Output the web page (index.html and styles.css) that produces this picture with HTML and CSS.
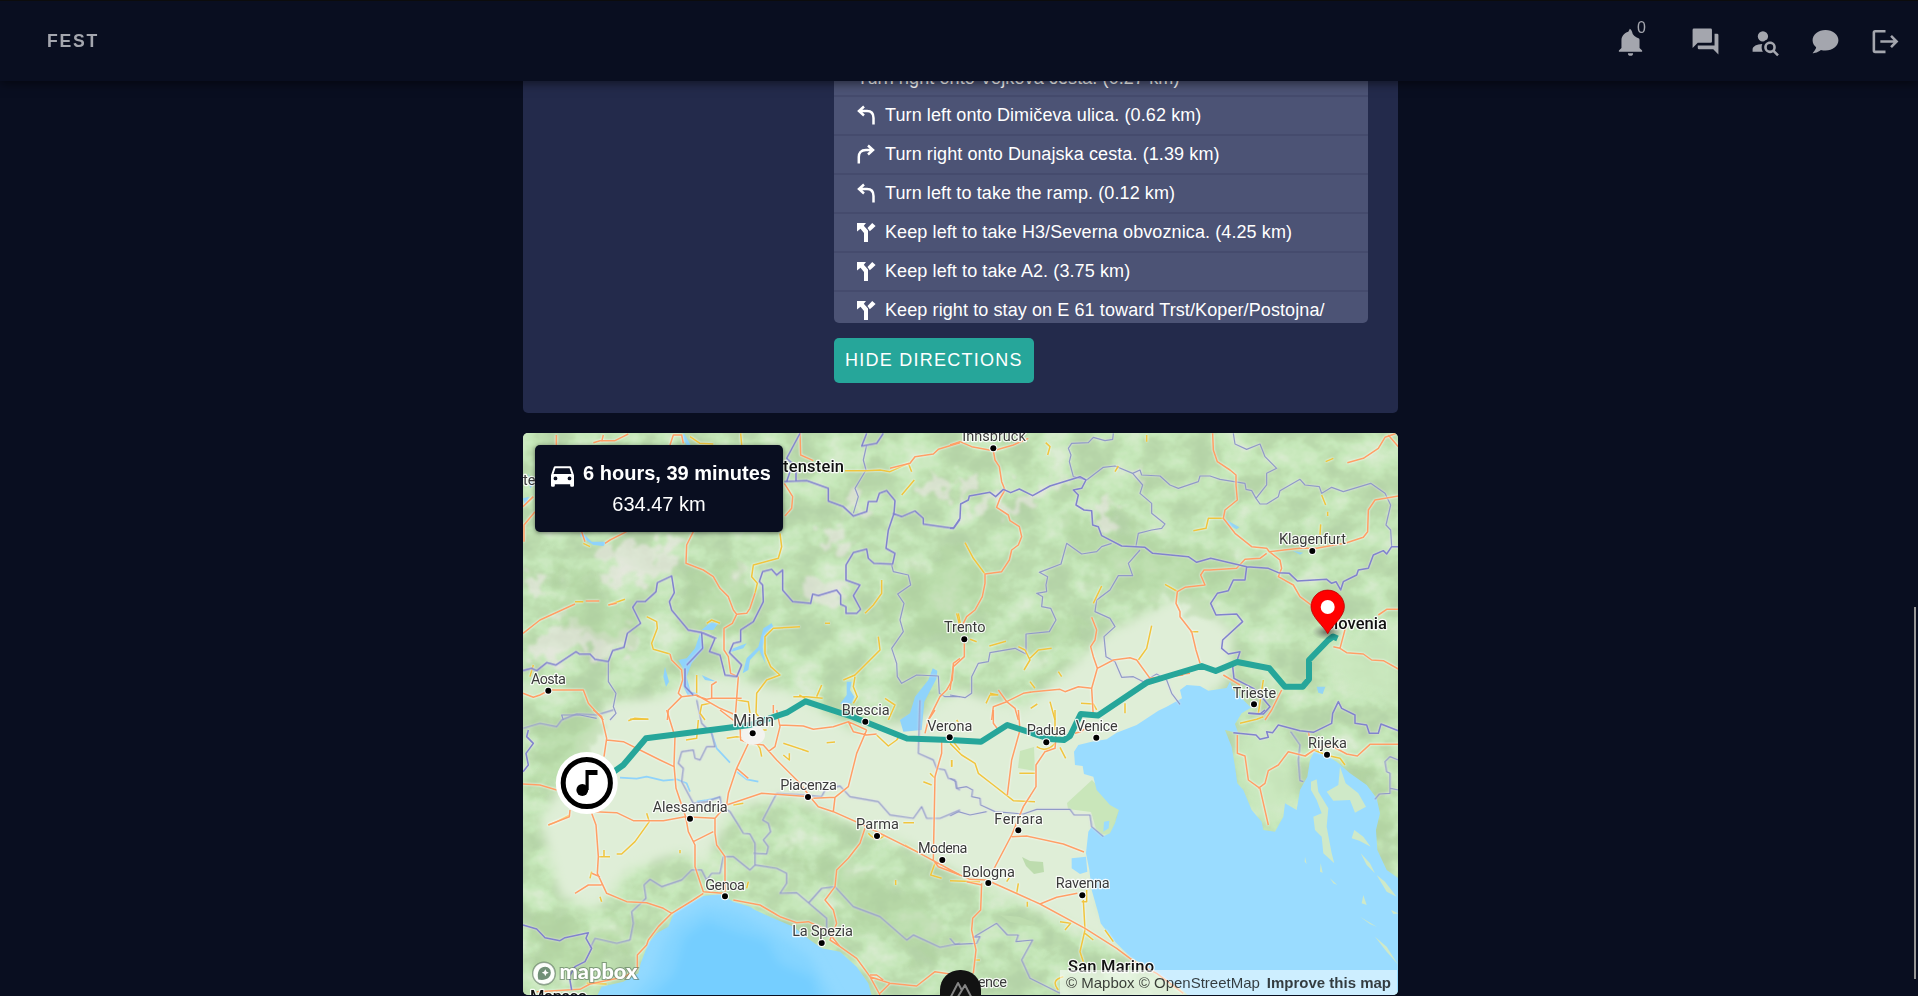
FILE: index.html
```html
<!DOCTYPE html>
<html lang="en">
<head>
<meta charset="utf-8">
<title>Fest</title>
<link rel="stylesheet" href="styles.css">
</head>
<body>
<header class="navbar">
  <a class="brand">FEST</a>
  <nav class="nav-icons">
    <span class="nav-bell">
      <svg class="nav-icon" viewBox="0 0 24 24"><path d="M21 19V20H3V19L5 17V11C5 7.9 7 5.3 10.3 4.4L11.5 2.2C12.6 3 12.9 3.6 13.2 4.5C13.5 7 15.5 8.6 18.6 9.6C19 10.2 19 10.6 19 11V17ZM14 21A2 2 0 0 1 10 21Z"/></svg>
      <span class="badge">0</span>
    </span>
    <svg class="nav-icon" viewBox="0 0 24 24"><path d="M17,12V3A1,1 0 0,0 16,2H3A1,1 0 0,0 2,3V17L6,13H16A1,1 0 0,0 17,12M21,6H19V15H6V17A1,1 0 0,0 7,18H18L22,22V7A1,1 0 0,0 21,6Z"/></svg>
    <svg class="nav-icon" viewBox="0 0 24 24"><path d="M15.5,12C18,12 20,14 20,16.5C20,17.38 19.75,18.21 19.31,18.9L22.39,22L21,23.39L17.88,20.32C17.19,20.75 16.37,21 15.5,21C13,21 11,19 11,16.5C11,14 13,12 15.5,12M15.5,14A2.5,2.5 0 0,0 13,16.5A2.5,2.5 0 0,0 15.5,19A2.5,2.5 0 0,0 18,16.5A2.5,2.5 0 0,0 15.5,14M10,4A4,4 0 0,1 14,8C14,8.91 13.69,9.75 13.18,10.43C12.32,10.75 11.55,11.26 10.91,11.9L10,12A4,4 0 0,1 6,8A4,4 0 0,1 10,4M2,20V18C2,15.88 5.31,14.14 9.5,14C9.18,14.78 9,15.62 9,16.5C9,17.79 9.38,19 10,20H2Z"/></svg>
    <svg class="nav-icon" viewBox="0 0 24 24"><path d="M12,3C17.5,3 22,6.58 22,11C22,15.42 17.5,19 12,19C10.76,19 9.57,18.82 8.47,18.5C5.55,21 2,21 2,21C4.33,18.67 4.7,17.1 4.75,16.5C3.05,15.07 2,13.13 2,11C2,6.58 6.5,3 12,3Z"/></svg>
    <svg class="nav-icon" viewBox="0 0 24 24"><path d="M12 3V5H4V19H12V21H4A2 2 0 0 1 2 19V5A2 2 0 0 1 4 3ZM17 7L15.6 8.4L18.2 11H8V13H18.2L15.6 15.6L17 17L22 12Z"/></svg>
  </nav>
</header>

<main class="page">
  <section class="card">
    <ul class="directions">
      <li class="step">Turn right onto Vojkova cesta. (0.27 km)</li>
      <li class="step"><svg class="step-icon" viewBox="0 0 18 20"><path class="turn" d="M7 1.5L2 6L7 10.5M2.5 6H10C14.5 6 16.5 9 16.5 13V19.5"/></svg>Turn left onto Dimičeva ulica. (0.62 km)</li>
      <li class="step"><svg class="step-icon" viewBox="0 0 18 20"><path class="turn" d="M11 1.5L16 6L11 10.5M15.5 6H9C3.8 6 1.8 9 1.8 13V19.5"/></svg>Turn right onto Dunajska cesta. (1.39 km)</li>
      <li class="step"><svg class="step-icon" viewBox="0 0 18 20"><path class="turn" d="M7 1.5L2 6L7 10.5M2.5 6H10C14.5 6 16.5 9 16.5 13V19.5"/></svg>Turn left to take the ramp. (0.12 km)</li>
      <li class="step"><svg class="step-icon" viewBox="0 0 18 20"><path class="fork" d="M0 1H9L6.8 3.8L11 8.5V20H7V11L3.5 6.8L0 9.5ZM15.2 1L18.6 4L15.4 7L12.8 9.2L10.5 6Z"/></svg>Keep left to take H3/Severna obvoznica. (4.25 km)</li>
      <li class="step"><svg class="step-icon" viewBox="0 0 18 20"><path class="fork" d="M0 1H9L6.8 3.8L11 8.5V20H7V11L3.5 6.8L0 9.5ZM15.2 1L18.6 4L15.4 7L12.8 9.2L10.5 6Z"/></svg>Keep left to take A2. (3.75 km)</li>
      <li class="step"><svg class="step-icon" viewBox="0 0 18 20"><path class="fork" d="M0 1H9L6.8 3.8L11 8.5V20H7V11L3.5 6.8L0 9.5ZM15.2 1L18.6 4L15.4 7L12.8 9.2L10.5 6Z"/></svg>Keep right to stay on E 61 toward Trst/Koper/Postojna/</li>
    </ul>
    <button class="btn">HIDE DIRECTIONS</button>
  </section>

  <section class="map">
    <svg class="map-canvas" viewBox="523 433 875 562">
      <defs>
        <filter id="relief" x="0" y="0" width="100%" height="100%" color-interpolation-filters="sRGB">
          <feTurbulence type="fractalNoise" baseFrequency="0.028 0.034" numOctaves="4" seed="11"/>
          <feColorMatrix values="1 0 0 0 0  1 0 0 0 0  1 0 0 0 0  0 0 0 0 1"/>
          <feComponentTransfer>
            <feFuncR type="table" tableValues=".70 .70 .71 .735 .775 .82 .87 .87"/>
            <feFuncG type="table" tableValues=".82 .82 .83 .86 .91 .92 .93 .93"/>
            <feFuncB type="table" tableValues=".65 .65 .66 .68 .73 .78 .84 .84"/>
          </feComponentTransfer>
        </filter>
        <filter id="soft" x="-20%" y="-20%" width="140%" height="140%"><feGaussianBlur stdDeviation="16"/></filter>
        <filter id="blot" x="-20%" y="-20%" width="140%" height="140%"><feTurbulence type="fractalNoise" baseFrequency=".05" numOctaves="3" seed="4" result="n"/><feDisplacementMap in="SourceGraphic" in2="n" scale="55" xChannelSelector="R" yChannelSelector="G"/><feGaussianBlur stdDeviation="1.6"/></filter>
        <radialGradient id="pinshade"><stop offset="0" stop-color="#000" stop-opacity=".5"/><stop offset="1" stop-color="#000" stop-opacity="0"/></radialGradient>
      </defs>
      <rect x="523" y="433" width="875" height="562" fill="#c6e5b7"/>
      <rect x="523" y="433" width="875" height="562" filter="url(#relief)" opacity=".9"/>

      <!-- Po valley and the Venetian plain -->
      <g transform="translate(520 710) scale(.33333)" filter="url(#soft)" fill="#dfeed7">
        <path d="M60 330L200 90L260 -20L420 -40L560 -110L800 -60L1000 60L1180 30L1320 -60L1500 0L1620 -100L1760 -230L1990 -350L2140 -240L2120 -80L1900 60L1740 260L1740 600L1900 780L1600 620L1330 500L1150 400L900 300L800 260L640 300L560 460L480 430L330 480L230 600L120 560Z"/>
      </g>
      <!-- Istria and the Ljubljana basin -->
      <g transform="translate(950 710) scale(.33333)" filter="url(#soft)" fill="#cbe8bf" opacity=".8">
        <path d="M850 60L1020 80L1040 260L960 360L880 250ZM1080 -200L1345 -240V-20L1180 -60Z"/>
      </g>
      <!-- glaciers and bare ridges -->
      <g fill="#ece6e5" opacity=".6" filter="url(#blot)">
        <path d="M533 635L562 615L595 625L620 622L640 640L600 662L570 650L540 665ZM592 565L625 545L655 556L668 530L688 538L676 560L640 580L615 590ZM825 528L840 523L843 545L828 560ZM808 580L830 578L852 593L828 606L806 600ZM848 496L866 508L842 520ZM930 470L952 478L940 500L925 494Z"/>
        <path d="M958 470L970 480L975 505L1000 494L1020 496L1050 480L1072 480L1046 494L1006 514L988 510L962 502ZM1092 505L1122 510L1115 520L1096 518ZM735 565L752 568L745 586ZM530 578L552 575L542 592ZM1128 472L1148 468L1142 482Z"/>
      </g>
      <!-- patches of forest -->
      <g fill="#aed29c" opacity=".4" filter="url(#blot)">
        <path d="M560 560L640 620L620 650L560 620ZM690 570L740 560L760 620L700 640ZM880 570L980 555L1010 600L930 640L890 610ZM1060 510L1200 550L1290 580L1200 610L1090 580ZM535 720L600 710L590 770L535 790ZM700 860L780 850L830 890L860 930L930 960L950 910L850 860L790 850ZM535 910L600 930L640 910L600 980L535 980ZM1020 630L1080 610L1100 620L1040 660ZM1340 770L1398 790L1398 860L1376 830Z"/>
      </g>
      <g fill="#c9e6ba">
        <path d="M1067 803L1092 780L1119 810L1110 833L1098 835L1091 812L1068 809ZM1020 751L1034 747L1035 771L1018 768Z"/>
        <path d="M1022 857L1030 861L1043 862L1044 872L1034 874L1026 866ZM1000 915L1020 917L1036 923L1030 926L1010 922Z" fill="#bddcae"/>
      </g>

      <!-- Ligurian sea -->
      <g transform="translate(520 710) scale(.33333)">
        <path fill="#92d9ff" d="M230 860L245 830L310 815L355 790L362 760L385 700L410 670L445 650L462 610L500 585L550 558L600 553L640 575L690 590L705 600L760 625L820 650L870 690L905 715L960 725L1010 770L1045 820L1056 860Z"/>
        <g filter="url(#soft)">
          <path fill="#84d4ff" d="M310 880L400 790L430 700L470 640L560 590L650 605L760 665L870 740L950 880Z"/>
          <path fill="#75ceff" d="M370 880L460 790L490 680L560 630L640 660L740 690L780 760L880 800L900 880Z"/>
        </g>
      </g>
      <!-- Adriatic -->
      <g transform="translate(950 710) scale(.33333)">
        <path fill="#9adcff" d="M840 -85L830 -66L775 -58L750 -72L710 -75L690 -60L696 -35L650 -10L625 2L560 45L500 68L470 88L425 95L385 105L372 125L375 165L398 168L402 192L430 200L440 240L480 285L507 300L495 340L480 370L462 378L425 350L415 365L408 430L418 480L425 540L445 610L452 640L490 690L540 740L620 790L690 835L720 860H1345V505L1310 480L1282 420L1278 360L1290 310L1280 265L1250 225L1200 190L1160 155L1130 137L1095 120L1080 150L1072 200L1050 240L1040 300L1005 280L1000 320L975 365L940 360L935 335L905 300L880 240L862 220L855 170L845 110L825 60L865 70L855 42L875 10L900 -5L905 -5L880 -30L850 -60ZM365 445L408 440L412 485L390 492L365 475ZM462 335L478 332L476 355L460 365Z"/>
        <g fill="#cfe9c8">
          <path d="M1083 215L1100 208L1105 245L1135 295L1130 350L1145 430L1153 460L1120 430L1115 380L1095 360L1090 320L1115 310L1100 270L1083 240Z"/>
          <path d="M1170 170L1187 220L1225 250L1248 290L1215 308L1200 270L1150 272L1130 245L1165 225Z"/>
          <path d="M1213 360L1240 380L1262 410L1228 392L1205 385ZM1232 430L1260 460L1275 490L1250 465ZM1280 495L1305 515L1340 560L1310 545ZM1065 440L1070 462L1064 455ZM1112 460L1118 488L1110 485ZM1140 505L1162 525L1150 520ZM1240 555L1250 585L1235 580ZM1230 620L1280 650L1260 642ZM1275 680L1310 710L1345 765L1310 725ZM1323 600L1345 610L1330 612Z"/>
        </g>
      </g>

      <!-- lakes -->
      <g transform="translate(520 430) scale(.33333)" fill="#8fd3fb">
        <path d="M540 610L552 655L515 700L500 740L512 785L535 790L505 800L488 765L492 720L475 690L500 685L525 655ZM545 600L570 578L595 580L580 600ZM435 710L447 755L438 770L430 740ZM545 735L590 755L555 750Z"/>
        <path d="M730 595L755 580L760 590L738 608L728 650L735 700L718 660L690 690L685 720L668 730L680 685L715 650L722 625ZM640 655L680 640L670 655L625 668Z"/>
        <path d="M980 755L995 755L990 780L1003 800L995 820L960 822L980 795ZM1238 715L1252 722L1250 745L1213 815L1205 900L1150 905L1140 870L1170 850L1185 800L1225 750Z"/>
        <path d="M185 305L215 335L260 335L250 348L220 345L180 318ZM492 10L512 45L500 45L485 20ZM9 205L28 200L15 225ZM25 130L40 165L30 175Z"/>
        <path d="M2390 770L2416 770L2408 792L2395 788ZM2120 270L2158 292L2150 298L2125 285ZM2318 362L2350 368L2340 374Z" opacity=".9"/>
      </g>

      <!-- water courses -->
      <g class="river" transform="translate(520 710) scale(.33333)">
        <path d="M300 203L350 206L380 200L430 212L470 208L500 220L510 245M575 70L590 115L630 158M650 185L680 208L715 215M530 275L560 270L600 262"/>
      </g>

      <!-- regional borders -->
      <g class="border minor">
        <g transform="translate(520 430) scale(.33333)">
          <path d="M265 695V755L288 790L280 830L288 850L270 870M1040 45L1030 90L1038 120L1005 175L1015 200L1000 250M1115 405L1120 425L1165 435L1172 465L1133 492L1152 520L1140 570L1150 605L1115 655L1130 700L1132 740L1145 760L1190 735L1255 738L1258 790L1275 800L1320 800M505 600L550 608L590 625M130 870L125 855L180 855L230 865"/>
        </g>
        <g transform="translate(950 430) scale(.33333)">
          <path d="M490 10L488 28L465 32L430 22L415 38L365 40L355 55L363 75L358 95L370 140L410 150L460 112L495 108L548 130L570 120L575 135L630 138L660 165L685 175L745 155L750 138L780 138L810 148L885 160L888 178L905 182L918 205L950 165V130L980 115L945 80L930 42L890 58L855 42L850 10"/>
          <path d="M918 205L930 222L950 222L985 200L990 182L1050 148L1065 165L1108 170L1115 190L1145 172L1180 185L1262 160L1305 190L1322 225L1308 285L1322 300L1325 350M548 130L578 165L570 190L605 220V250L645 282L635 295L605 300L565 310L558 348M485 340L455 350L440 365L395 372L350 340L333 402L268 427L293 440L288 465L290 485L260 490L278 500L275 530L302 535L318 570L298 605L228 612V672L195 655L120 668L115 695L85 700L65 740V790L45 803L0 795"/>
          <path d="M570 360L535 400L548 437L505 437L480 480L440 510L435 545L480 565L495 590L462 620L468 680L495 695L515 742L550 740L580 755L620 732L650 750L665 790L690 823"/>
        </g>
        <g transform="translate(520 710) scale(.33333)">
          <path d="M530 -30L545 40L575 70L585 110L560 110L540 150L525 145L520 120L485 125L475 160L490 175L485 215L520 280L560 275L600 260L605 290L630 305L655 345L670 370L690 372L705 400V465L690 480L640 440L610 440L600 490L575 490L560 510L545 480L515 480L485 510L425 530L390 508L372 525L378 565L335 605L340 640L330 690L290 700L225 685L210 715M700 430L740 432L745 410L730 390L752 365L745 340L728 330L770 250L850 255L905 260L915 240L960 228L990 260L1075 275L1110 315L1180 325L1205 290L1220 325L1260 325L1320 300M705 465L770 475L800 490V520L780 550L830 548L920 625V680M865 580L905 535L945 530L1000 590L1080 620L1160 690L1180 675L1260 712L1320 700M1200 -30L1195 130L1240 150L1250 175L1275 180L1285 205L1305 210L1310 235L1320 240M9 55L60 40L110 50L125 30L170 12L230 15L280 0"/>
        </g>
        <g transform="translate(950 710) scale(.33333)">
          <path d="M0 205L18 215L20 235L50 230L68 240L65 260L90 265L92 285L135 305L220 312L260 298L360 298L372 315L420 315L425 350L460 380M0 318L25 305L60 315L110 305M0 685L15 703L80 700L90 680L70 682L140 640L172 675H205L198 695L248 690L215 750L240 805L330 850M1022 65L1050 105L1045 150L1050 212L1060 215M1345 150L1320 140L1305 155L1310 185L1320 190V250L1288 252L1275 268M1345 240L1322 235"/>
        </g>
      </g>

      <!-- roads -->
      <g class="road yellow">
        <g transform="translate(520 430) scale(.33333)">
          <path d="M780 310L785 350L775 385L700 405L695 440L712 460L705 490M662 10L665 45M975 122L1040 122L1080 120L1110 125L1165 100L1175 125M1183 150L1145 195M510 20L540 40L580 42M380 560L410 575L412 595L395 640L400 658L450 672M840 590L760 595L735 620L735 670L752 710L780 735L740 750L710 790L708 850L725 870M915 580H930M1085 450V490L1060 525L1035 550M1075 620L1080 660L1050 690L1005 735L970 750M1005 740L1000 770L1012 800L1000 820M530 735V790M165 515H190M265 525L315 508M40 705L30 740M190 340L210 350M570 820L545 825L540 850L555 870M650 810L685 815L690 850M820 800L860 800L908 805M855 805L838 795M890 800L905 765M1095 805L1125 825L1105 870M560 580L575 570L600 580M330 868H385M1310 550L1320 590"/>
        </g>
        <g transform="translate(950 430) scale(.33333)">
          <path d="M45 338L70 385L105 432M287 38L300 50L293 75M590 15V35M505 108L495 125M730 302L768 295L775 265L820 265M455 468L430 520M645 463L680 483M605 587L590 655L565 690M745 605L720 605M118 648L168 634M205 650L225 660L240 690L222 720M240 685L265 660L305 655M240 755L255 775M325 725L335 740M120 790L145 795M242 835L262 822M300 815L315 870M108 820L120 795L145 795M393 820L430 822L440 840M1127 95L1150 85M1115 195L1127 225M1133 245V258M1112 283L1110 315M525 820L525 850M60 628L80 635M25 550L35 600M940 750L925 850"/>
        </g>
        <g transform="translate(520 710) scale(.33333)">
          <path d="M325 32L345 25L385 28M535 30L530 85L498 90M620 85L650 80L700 85L720 115L725 140M700 60L740 60M790 100L866 125M790 135L808 150V130M920 98L945 96M1070 75L1105 108L1130 90L1140 75M1270 90L1300 95L1320 120M85 345L110 335L150 315M290 432L305 432L345 395L388 335L380 310M235 440H270M252 420V440M215 485L210 505M240 560L245 575M640 285L670 280M685 515L680 535M1155 405L1190 425M1150 338H1182M1245 460L1232 495L1265 505M1295 150V170M1210 215L1235 225M1230 190L1245 205M1127 510V525M480 420V430M200 820L260 822M1045 370Q1070 400 1095 375M1310 30L1320 45"/>
        </g>
        <g transform="translate(950 710) scale(.33333)">
          <path d="M0 100L35 135L75 160L85 190L130 225L190 272L255 275M5 150V170M208 190H255M315 0L315 60M330 112L347 145M260 110Q290 130 315 100M400 570L405 660L390 725L400 755M410 540V575H395M330 635L362 640L345 660M405 670L430 690M465 660L490 695M205 520L200 550M180 500L170 515M0 512L90 515M232 575V590M75 750H90M340 800Q300 810 325 840M870 40L920 28L940 20M1065 140L1090 120L1140 138L1170 145L1185 165"/>
        </g>
      </g>
      <g class="road orange">
        <g transform="translate(520 430) scale(.33333)">
          <path d="M9 610L60 570L165 522M197 513H238M265 525L290 520M520 305L500 345L498 400L550 420L580 440L600 475L625 500L640 540L650 553L637 580L612 595V660L625 680L632 730L655 740M705 490L690 535L680 550L650 553M655 740L645 870M450 672L455 690L485 720L488 750L475 790L485 800L530 795L600 835L640 852M485 800L445 840L442 870M530 798L560 808L575 805L665 805M575 805L575 765L590 755M840 10L842 75L880 92M793 160L818 200L815 235L795 258M450 45L460 15L485 15L490 40M220 38L240 32H285L325 12M245 35L250 15M109 15V45M9 230L40 200M45 245L12 285V335M185 305L195 335M320 305L270 330L255 340M85 780H190L205 820L250 870M9 790L40 802L60 795L85 782M1110 115L1170 100L1185 80L1240 72L1255 58L1320 38M1320 685L1300 700L1297 750L1280 780L1260 800L1235 850L1225 870M760 825V850"/>
        </g>
        <g transform="translate(950 430) scale(.33333)">
          <path d="M0 45L30 35L65 50L130 62L190 45L235 25M130 62L135 90L148 110L155 155L165 180L150 205L140 232L175 255L180 272L208 290L215 320L205 345L185 360L178 390L155 425L105 432V460L97 500L75 540L50 560L35 590M43 640V680L10 710L0 780M788 10L790 60L802 95L840 120L858 135V165L862 210L825 240L820 265L855 310L905 350L950 355L958 365L1050 355L1100 355L1190 338L1240 322L1253 305L1255 240L1275 210L1345 198M958 365L990 390L995 415L985 440L1030 465L1050 500L1090 530M950 370L930 385L885 388L860 415L780 420L762 420L752 435L765 465L705 472L682 485L678 520L690 545V560L725 605L738 660L750 700M425 562L440 600L435 630L422 650L430 680L442 715L425 775L430 860M442 715L490 690L540 683L560 690L600 745L720 730M145 780L170 815L220 790L250 785L330 778L345 785L385 770L425 775M170 815L130 830L125 870M170 815L195 835L205 870M820 735L870 765M995 780L965 840L945 870M1192 98L1240 85L1285 55L1305 22L1340 10M1315 15L1345 50M1285 555L1310 538H1345M1190 580L1170 655L1150 650M1170 655L1190 668L1240 672L1265 690L1300 692L1345 717M590 758L620 745L700 735"/>
        </g>
        <g transform="translate(520 710) scale(.33333)">
          <path d="M220 0L245 20L260 85L252 140M440 0L465 80L462 165L468 235L490 300L497 320L505 365L525 405V470L550 545L610 550M260 90L310 95L360 120L420 150L462 170M9 222L60 225L110 240M225 305L290 308L340 332H430L495 320L585 325M150 300L148 320L85 345M215 310L228 345L235 440L232 490L260 550L320 575L380 578L430 595L455 610L520 570L550 550M455 610L415 650L385 690L380 705L352 735V775L315 800L210 822L180 838L50 845M585 325L620 285L725 250L870 260M870 260L895 290L940 305L1030 345L1190 425L1320 495M940 305L945 262L985 230L1010 130L1040 60M880 265L945 262M620 285L625 250L650 175L690 90M585 325V370L590 405L615 440V545M520 395L580 365M660 50L662 90L690 100L730 105L770 150L840 220L870 260M600 0L665 50L700 55M780 45L850 48L880 58L940 50L985 35L1040 60M770 0L780 50L765 110L745 125M650 175L685 205M985 35L1000 65L1040 75L1070 72M640 570L720 585L780 620L830 638L865 635L920 660L960 710L1010 745L1050 800L1080 855M960 710L930 690L950 640L940 600L915 570L945 530L950 480L985 445L1020 400L1035 355M1050 800L1110 820L1190 828L1245 785L1310 795M1110 820L1080 850M245 525H205L165 550M215 490L240 500M1265 90V130L1245 200L1240 450M1215 70L1225 30L1245 0M1240 450L1255 470L1320 495M1050 795H1070L1090 810"/>
        </g>
        <g transform="translate(950 710) scale(.33333)">
          <path d="M130 0V40L145 60M205 0L210 60L185 150L172 255M320 65L315 115L285 125L258 165V230L220 290L185 375L130 480M185 380L230 378L340 402L402 426M0 482L60 508L110 510L270 582L405 655L500 715L560 760L620 790L700 850M270 582L320 562L382 550M95 520L92 600L68 625L65 660L78 720L70 790M50 515L95 525M862 75V130L885 138L895 210L930 235L955 345M925 235L945 220L955 182L985 165L1015 125L1065 138L1100 115L1140 105L1190 132L1222 138L1260 103H1345M1075 65L1078 80M375 70L392 65L415 50"/>
        </g>
      </g>

      <!-- national borders -->
      <g class="border">
        <g transform="translate(520 430) scale(.33333)">
          <path d="M9 722L35 715L50 722L80 698L108 705L168 665L178 672L210 672L225 688L265 695L278 662L312 652L322 610L362 580L338 532L350 515L375 515L408 485L412 458L455 438L463 488L448 515L455 540L505 600L545 608L585 625L568 665L600 675L615 735L650 740L665 705L628 668L640 640L662 635V600L700 575L730 515L728 465L718 455L728 425L755 418L770 435L788 420V480L818 515L872 520L878 492L895 497L950 480L962 495V523L978 530V550H1010L1022 538L1000 497L1020 465L978 450V405L1000 368L1040 357L1045 385L1062 400L1118 402L1125 370L1098 355L1105 300L1122 250L1125 212L1100 182L1078 190L1070 215L1045 215L1040 245L1000 258L970 230L925 213V175L860 152L793 155M1118 250L1145 260L1185 243L1210 265V282L1300 295L1320 268M840 10L800 85L828 110V152M1090 10L1070 40L1025 48L1040 10M545 610L548 655L500 705M800 155L815 110M495 715V770L520 795"/>
        </g>
        <g transform="translate(950 430) scale(.33333)">
          <path d="M0 295L12 293L30 265L32 222L55 210L58 198L120 187L137 200L160 178L182 188L208 177L248 197L300 168L390 140L408 150L395 175L370 180L385 195L378 225L402 240L425 242L428 285L445 290L455 317L515 348L585 352L608 370L715 380L740 397L782 385L890 410L955 415L985 428L1018 430L1042 453L1130 448L1145 460L1158 455L1172 480L1180 455L1220 435L1225 420L1255 415L1270 375L1300 362L1310 372L1325 350H1345M890 410L885 450H850L835 482L802 490L782 520L798 555L860 552L878 575L818 630L815 655L835 672L870 665L860 695L848 710L852 745L910 775L930 795L960 830L940 852L895 850"/>
        </g>
        <g transform="translate(520 710) scale(.33333)"><path d="M9 645L50 657L75 683L120 692L135 683L205 668L198 685L215 715L195 755L165 770L148 800L155 840M9 185L25 165L18 130L40 100L20 80L25 60"/></g>
        <g transform="translate(950 710) scale(.33333)"><path d="M850 68L918 75L930 88L955 82L950 65L968 68L985 45L1050 62L1090 67L1145 40L1148 10L1165 -25L1175 -5L1215 15V40L1250 45L1258 70H1285L1293 42L1345 62M895 10L930 12L945 0"/></g>
      </g>

      <ellipse cx="753" cy="735" rx="12" ry="10" fill="#f3f3ef"/>
      <polyline class="route" points="612,773 623.3,765 646,738.3 750,725 786.7,712.7 805.7,701.3 853,717 907,738.5 950,740 981,741.7 1007.3,725 1050,739 1064,740 1070,736 1080.7,714 1098,715.5 1146.7,682.7 1201.7,666 1215.7,671 1237.3,662 1269.3,668.3 1285,686.7 1302.7,686.7 1309,679.3 1309,660 1328.3,640 1333,636.5 1337.5,638.5"/>

      <g class="dots">
        <circle cx="548.3" cy="690.7" r="3"/><circle cx="865.3" cy="721.7" r="3"/><circle cx="752.7" cy="733.3" r="3"/><circle cx="993.3" cy="448.3" r="3"/><circle cx="964.3" cy="639.3" r="3"/><circle cx="1312.3" cy="551" r="3"/><circle cx="1254" cy="704.3" r="3"/><circle cx="949.7" cy="737.3" r="3"/><circle cx="808" cy="797" r="3"/><circle cx="690" cy="818.7" r="3"/><circle cx="877" cy="836" r="3"/><circle cx="942.3" cy="860" r="3"/><circle cx="725" cy="896.3" r="3"/><circle cx="821.7" cy="943" r="3"/><circle cx="1046.3" cy="742.3" r="3"/><circle cx="1096.3" cy="737.7" r="3"/><circle cx="1327" cy="754.7" r="3"/><circle cx="1018.3" cy="830.3" r="3"/><circle cx="988.3" cy="883" r="3"/><circle cx="1082.3" cy="895.3" r="3"/>
      </g>
      <g class="labels">
        <text x="531" y="684" textLength="35">Aosta</text>
        <text x="841.7" y="715" textLength="48">Brescia</text>
        <text class="city" x="733" y="725.5" textLength="41">Milan</text>
        <text x="944" y="632" textLength="41.5">Trento</text>
        <text x="962.3" y="441" textLength="63.5">Innsbruck</text>
        <text x="1279" y="544.3" textLength="67">Klagenfurt</text>
        <text x="1232.7" y="697.5" textLength="43.5">Trieste</text>
        <text x="780.3" y="790" textLength="56.5">Piacenza</text>
        <text x="652.7" y="812" textLength="75">Alessandria</text>
        <text x="856" y="829.3" textLength="43">Parma</text>
        <text x="918" y="853.3" textLength="49.5">Modena</text>
        <text x="705.3" y="890" textLength="39.5">Genoa</text>
        <text x="792.3" y="936.3" textLength="60.5">La Spezia</text>
        <text x="927.3" y="730.7" textLength="45">Verona</text>
        <text x="1026.7" y="735.3" textLength="39.5">Padua</text>
        <text x="1075.7" y="731" textLength="42">Venice</text>
        <text x="1308" y="748.3" textLength="39">Rijeka</text>
        <text x="994.3" y="824" textLength="48.5">Ferrara</text>
        <text x="962.3" y="876.7" textLength="52.5">Bologna</text>
        <text x="1055.7" y="888.3" textLength="54">Ravenna</text>
        <text x="978" y="987" textLength="29">ence</text>
        <text x="523" y="485">te</text>
        <text class="country" x="783" y="472" textLength="61">tenstein</text>
        <text class="country" x="1324" y="628.7" textLength="63">Slovenia</text>
        <text class="country" x="1068" y="972.3" textLength="86">San Marino</text>
        <text class="country" x="530" y="1002" textLength="57">Monaco</text>
      </g>

      <!-- destination pin -->
      <ellipse cx="1327" cy="632" rx="15" ry="8" fill="url(#pinshade)"/>
      <path fill="#f00" stroke="#b80000" stroke-width=".8" d="M1327.7 633.8C1324 626 1311 617 1311 606.8A16.7 16.7 0 0 1 1344.4 606.8C1344.4 617 1331.4 626 1327.7 633.8Z"/>
      <circle cx="1327.7" cy="607" r="7" fill="#fff"/>

      <!-- event marker -->
      <circle cx="586.8" cy="783" r="31" fill="#fff"/>
      <circle cx="586.8" cy="783" r="23.6" fill="#fff" stroke="#000" stroke-width="5"/>
      <circle cx="582.3" cy="790" r="5.9"/>
      <path d="M585.5 770H597.5V775H588.7V790H585.5Z"/>

      <!-- provider logo -->
      <g class="provider">
        <circle cx="544" cy="973.5" r="11.3" fill="#fff" fill-opacity=".95" stroke="#4c6650" stroke-opacity=".55" stroke-width="1.4"/>
        <path d="M538.3 979.5C536.5 972 539.5 966.8 545.3 966.8A6 6 0 0 1 550.8 972.5C550.8 978 545.5 981 538.3 979.5Z" fill="#719077"/>
        <path d="M545.3 969.2L546.4 971.6L548.8 972.7L546.4 973.8L545.3 976.2L544.2 973.8L541.8 972.7L544.2 971.6Z" fill="#fff"/>
        <text x="559.5" y="979.3" textLength="78" lengthAdjust="spacingAndGlyphs">mapbox</text>
      </g>
    </svg>

    <div class="trip">
      <div class="trip-time">
        <svg class="car" viewBox="3 5 18 16"><path d="M5,11L6.5,6.5H17.5L19,11M17.5,16A1.5,1.5 0 0,1 16,14.5A1.5,1.5 0 0,1 17.5,13A1.5,1.5 0 0,1 19,14.5A1.5,1.5 0 0,1 17.5,16M6.5,16A1.5,1.5 0 0,1 5,14.5A1.5,1.5 0 0,1 6.5,13A1.5,1.5 0 0,1 8,14.5A1.5,1.5 0 0,1 6.5,16M18.92,6C18.72,5.42 18.16,5 17.5,5H6.5C5.84,5 5.28,5.42 5.08,6L3,12V20A1,1 0 0,0 4,21H5A1,1 0 0,0 6,20V19H18V20A1,1 0 0,0 19,21H20A1,1 0 0,0 21,20V12L18.92,6Z"/></svg>
        <strong>6 hours, 39 minutes</strong>
      </div>
      <div>634.47 km</div>
    </div>
    <div class="attribution"><span>© Mapbox © OpenStreetMap</span><strong>Improve this map</strong></div>
  </section>
</main>

<div class="devtools"><svg class="peaks" viewBox="0 0 24 20"><path d="M9 17.5H1.5L9 3L12.5 9.5M8.5 17.5L16 5L22.5 17.5H12"/></svg></div>
<div class="scroll-thumb"></div>
</body>
</html>
```
FILE: styles.css
```css
* { box-sizing: border-box; }

body {
  margin: 0;
  height: 996px;
  overflow: hidden;
  background: #090e20;
  color: #fff;
  font: 18px/27px "Liberation Sans", Arial, sans-serif;
}

.navbar {
  position: fixed;
  inset: 0 0 auto;
  z-index: 5;
  height: 81px;
  padding: 1px 17px 0 47px;
  display: flex;
  align-items: center;
  justify-content: space-between;
  background: #090e20;
  border-top: 1px solid #0c0c0c;
  box-shadow: 0 2px 10px rgba(0, 0, 0, .55);
  color: #a4a6ae;
}

.brand {
  margin-top: -1px;
  font-size: 17.6px;
  font-weight: bold;
  letter-spacing: 1.8px;
}

.nav-icons {
  display: flex;
  align-items: center;
  gap: 29px;
}

.nav-icon {
  display: block;
  width: 31px;
  height: 31px;
  fill: currentColor;
}

.nav-bell {
  position: relative;
  margin-right: 15px;
}

.badge {
  position: absolute;
  left: 22px;
  top: -8px;
  font-size: 16px;
  line-height: 20px;
}

.page {
  width: 875px;
  margin-left: 523px;
  display: flex;
  flex-direction: column;
  gap: 20px;
}

.card {
  height: 413px;
  padding: 58px 30px 0 311px;
  background: #232a4b;
  border-radius: 5px;
}

.directions {
  height: 265px;
  margin: 0 0 15px;
  padding: 0;
  overflow: hidden;
  list-style: none;
  background: #4c5375;
  border-radius: 5px;
}

.step {
  height: 39.05px;
  padding: 0 23px 1px;
  display: flex;
  align-items: center;
  gap: 10px;
  white-space: nowrap;
  letter-spacing: .1px;
  border-bottom: 2px solid #454b6d;
}

.step:first-child { padding-top: 4px; }

.step-icon {
  width: 18px;
  height: 20px;
  overflow: visible;
  flex: none;
}

.turn { fill: none; stroke: #fff; stroke-width: 2.5; }
.fork { fill: #fff; }

.btn {
  display: block;
  width: 200px;
  height: 45px;
  padding: 0;
  border: 0;
  border-radius: 5px;
  background: #26a69a;
  color: #fff;
  font: 18px "Liberation Sans", Arial, sans-serif;
  letter-spacing: 1.25px;
}

.map {
  position: relative;
  height: 562px;
  overflow: hidden;
  border-radius: 5px;
}

.map-canvas {
  display: block;
  width: 875px;
  height: 562px;
}

.road path, .border path, .river path { fill: none; stroke-linejoin: round; }
.road path { stroke-width: 4.6; }
.road { filter: drop-shadow(0 0 .8px #fff); }
.orange path { stroke: #ff9f66; }
.yellow path { stroke: #f0c53e; }
.border path { stroke: #8083cd; stroke-width: 4.6; }
.minor path { stroke: #909ac8; stroke-width: 3.6; }
.border { filter: drop-shadow(0 0 1px #e6def0); }
.river path { stroke: #8fd3fb; stroke-width: 5; }

.route {
  fill: none;
  stroke: #26a69a;
  stroke-width: 6;
  stroke-linejoin: round;
}

.dots circle { stroke: #fff; stroke-width: 2; paint-order: stroke; }

.labels text {
  font: 14.5px Roboto, sans-serif;
  fill: #3b3b3b;
  stroke: #fff;
  stroke-opacity: .85;
  stroke-width: 2.4px;
  stroke-linejoin: round;
  paint-order: stroke;
}

.labels .city { font-size: 16.5px; }
.labels .country { font-size: 16.5px; font-weight: 500; fill: #111; }

.provider text {
  font: 900 20px Lato, sans-serif;
  fill: #fff;
  stroke: #4c6650;
  stroke-opacity: .55;
  stroke-width: 2px;
  paint-order: stroke;
}

.trip {
  position: absolute;
  left: 12px;
  top: 12px;
  width: 248px;
  height: 87px;
  padding-top: 13px;
  border-radius: 5px;
  background: #090e20;
  box-shadow: 0 1px 4px rgba(0, 0, 0, .5);
  font-size: 20px;
  line-height: 31px;
  text-align: center;
}

.trip-time {
  display: flex;
  justify-content: center;
  gap: 9px;
  padding-left: 4px;
  white-space: nowrap;
}

.car {
  width: 23px;
  height: 21px;
  margin-top: 8px;
  fill: #fff;
}

.attribution {
  position: absolute;
  right: 1px;
  bottom: 0;
  width: 337px;
  height: 25px;
  padding: 0 6px;
  display: flex;
  justify-content: space-between;
  background: rgba(255, 255, 255, .5);
  color: rgba(0, 0, 0, .75);
  font-size: 15px;
  line-height: 26px;
  white-space: nowrap;
}

.devtools {
  position: absolute;
  left: 940px;
  top: 970px;
  width: 41px;
  height: 26px;
  padding: 10px 0 0 9px;
  overflow: hidden;
  border-radius: 20px 20px 0 0;
  background: #121212;
}

.peaks {
  display: block;
  width: 24px;
  height: 20px;
  fill: none;
  stroke: #858585;
  stroke-width: 2;
  stroke-linejoin: round;
}

.scroll-thumb {
  position: absolute;
  right: 2px;
  top: 607px;
  width: 2px;
  height: 372px;
  background: #979797;
}
```
